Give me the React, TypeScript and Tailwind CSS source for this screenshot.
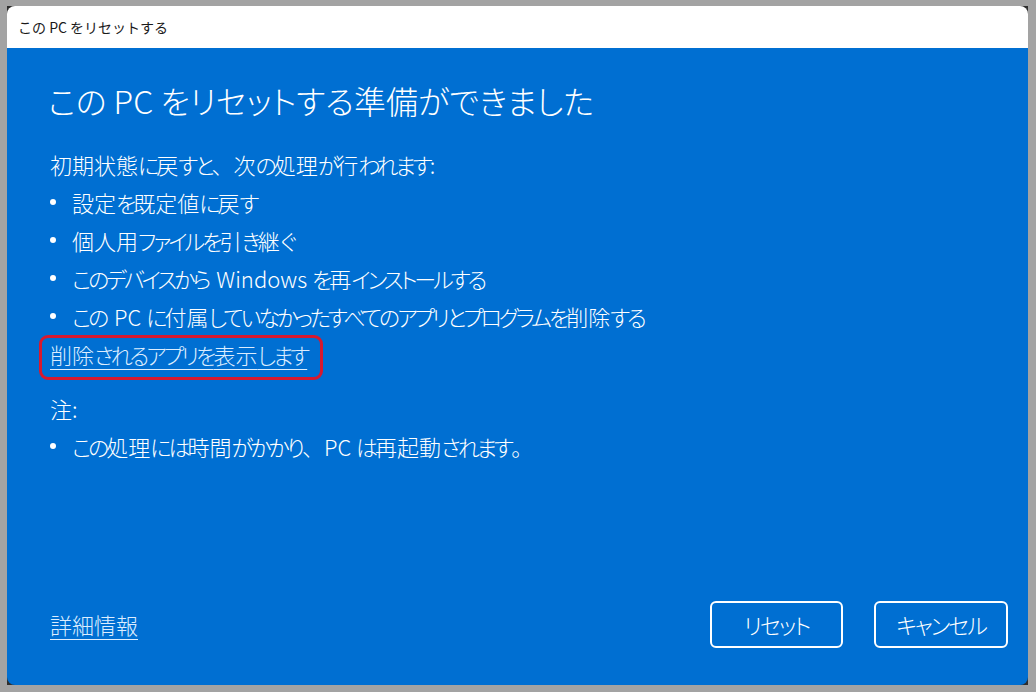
import React from "react";

const font = { fontFamily: '"Noto Sans CJK JP", "Noto Sans", sans-serif' };

function J({ t, btn = false }: { t: string; btn?: boolean }) {
  const parts = t.split(/([\u3040-\u30ff]+|\u3001)/).filter((p) => p.length > 0);
  const cls = btn ? "tracking-[-2px]" : "tracking-[-3px]";
  return (
    <>
      {parts.map((p, i) => {
        if (p === "\u3001") {
          return (
            <span key={i} className="[font-feature-settings:normal]">
              {p}
            </span>
          );
        }
        if (/^[\u3040-\u30ff]+$/.test(p)) {
          const next = parts[i + 1];
          if (next && next.startsWith(" ") && p.length > 1) {
            return (
              <span key={i}>
                <span className={cls}>{p.slice(0, -1)}</span>
                <span>{p.slice(-1)}</span>
              </span>
            );
          }
          return (
            <span key={i} className={cls}>
              {p}
            </span>
          );
        }
        return <span key={i}>{p}</span>;
      })}
    </>
  );
}

function Bullet({ t }: { t: string }) {
  return (
    <div className="flex h-[38px] items-center">
      <span className="w-[22px] flex items-center">
        <span className="block w-[6px] h-[6px] rounded-full bg-white" />
      </span>
      <span>
        <J t={t} />
      </span>
    </div>
  );
}

export default function App() {
  return (
    <div
      className="w-[1036px] h-[692px] bg-[#a3a3a3] pt-[6px] pl-[7px] pr-[8px] pb-[7px] [font-feature-settings:'palt']"
      style={font}
    >
      <div className="w-full h-full bg-[#2e2e2e]">
        <div className="w-full h-full rounded-[8px] overflow-hidden flex flex-col">
          <div className="h-[42px] bg-white flex items-center pl-[11px] text-[14px] text-[#1a1a1a] font-normal [font-feature-settings:normal]">
            この PC をリセットする
          </div>
          <div className="flex-1 bg-[#006fd2] text-white flex flex-col px-[41px] pt-[32px] pb-[37px] font-light">
            <h1 className="text-[32px] leading-[40px] font-light">
              この PC をリセットする準備ができました
            </h1>
            <div className="mt-[25px] text-[22px] leading-[38px] pl-[2px]">
              <div className="h-[38px] flex items-center">
                <span>
                  <J t="初期状態に戻すと、次の処理が行われます:" />
                </span>
              </div>
              <Bullet t="設定を既定値に戻す" />
              <Bullet t="個人用ファイルを引き継ぐ" />
              <Bullet t="このデバイスから Windows を再インストールする" />
              <Bullet t="この PC に付属していなかったすべてのアプリとプログラムを削除する" />
              <div className="h-[38px] flex items-center">
                <span className="relative inline-block">
                  <span className="text-[#dcedff] underline underline-offset-[5px] decoration-1">
                    <J t="削除されるアプリを表示します" />
                  </span>
                  <span className="absolute left-[-11px] top-[0px] w-[284px] h-[45px] border-[3px] border-[#d7192f] rounded-[9px]" />
                </span>
              </div>
              <div className="h-[38px] flex items-center mt-[16px]">注:</div>
              <Bullet t="この処理には時間がかかり、PC は再起動されます。" />
            </div>
            <div className="mt-auto flex items-center justify-between pl-[2px]">
              <span className="text-[22px] text-[#dcedff] underline underline-offset-[5px] decoration-1">
                詳細情報
              </span>
              <div className="flex gap-[31px] mr-[-21px]">
                <button className="w-[133px] h-[47px] border-2 border-white rounded-[6px] text-[22px] text-white flex items-center justify-center font-light">
                  <J t="リセット" btn />
                </button>
                <button className="w-[134px] h-[47px] border-2 border-white rounded-[6px] text-[22px] text-white flex items-center justify-center font-light">
                  <J t="キャンセル" btn />
                </button>
              </div>
            </div>
          </div>
        </div>
      </div>
    </div>
  );
}
